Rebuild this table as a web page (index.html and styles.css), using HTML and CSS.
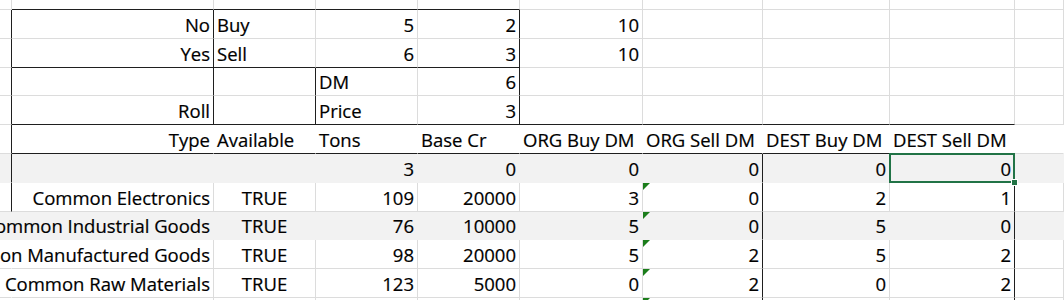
FILE: index.html
```html
<!DOCTYPE html>
<html>
<head>
<meta charset="utf-8">
<link rel="stylesheet" href="styles.css">
</head>
<body>
<div class="sheet">
  <div class="row top">
    <div class="c"></div><div class="c db"></div><div class="c db"></div><div class="c db"></div><div class="c db"></div><div class="c"></div><div class="c"></div><div class="c"></div><div class="c"></div><div class="c"></div>
  </div>
  <div class="row">
    <div class="c dr"></div><div class="c dr">No</div><div class="c lt">Buy</div><div class="c">5</div><div class="c dr">2</div><div class="c">10</div><div class="c"></div><div class="c"></div><div class="c"></div><div class="c"></div>
  </div>
  <div class="row">
    <div class="c dr"></div><div class="c dr db">Yes</div><div class="c lt db">Sell</div><div class="c db">6</div><div class="c dr db">3</div><div class="c">10</div><div class="c"></div><div class="c"></div><div class="c"></div><div class="c"></div>
  </div>
  <div class="row">
    <div class="c dr"></div><div class="c dr"></div><div class="c dr"></div><div class="c lt">DM</div><div class="c dr">6</div><div class="c"></div><div class="c"></div><div class="c"></div><div class="c"></div><div class="c"></div>
  </div>
  <div class="row">
    <div class="c dr"></div><div class="c dr db">Roll</div><div class="c dr db"></div><div class="c lt db">Price</div><div class="c dr db">3</div><div class="c db"></div><div class="c db"></div><div class="c db"></div><div class="c db"></div><div class="c"></div>
  </div>
  <div class="row hdr">
    <div class="c dr"></div><div class="c db">Type</div><div class="c lt db">Available</div><div class="c lt db">Tons</div><div class="c lt db">Base Cr</div><div class="c lt db">ORG Buy DM</div><div class="c lt db">ORG Sell DM</div><div class="c lt db">DEST Buy DM</div><div class="c lt db">DEST Sell DM</div><div class="c"></div>
  </div>
  <div class="row gray">
    <div class="c dr"></div><div class="c"></div><div class="c"></div><div class="c">3</div><div class="c">0</div><div class="c">0</div><div class="c dr">0</div><div class="c">0</div><div class="c dr">0<span class="selbox"></span><span class="handle"></span></div><div class="c"></div>
  </div>
  <div class="row">
    <div class="c dr"></div><div class="c">Common Electronics</div><div class="c ct">TRUE</div><div class="c">109</div><div class="c">20000</div><div class="c">3</div><div class="c dr">0<span class="tri"></span></div><div class="c">2</div><div class="c dr">1</div><div class="c"></div>
  </div>
  <div class="row gray">
    <div class="c"></div><div class="c">Common Industrial Goods</div><div class="c ct">TRUE</div><div class="c">76</div><div class="c">10000</div><div class="c">5</div><div class="c dr">0<span class="tri"></span></div><div class="c">5</div><div class="c dr">0</div><div class="c"></div>
  </div>
  <div class="row">
    <div class="c nr"></div><div class="c">Common Manufactured Goods</div><div class="c ct">TRUE</div><div class="c">98</div><div class="c">20000</div><div class="c">5</div><div class="c dr">2<span class="tri"></span></div><div class="c">5</div><div class="c dr">2</div><div class="c"></div>
  </div>
  <div class="row">
    <div class="c nr"></div><div class="c">Common Raw Materials</div><div class="c ct">TRUE</div><div class="c">123</div><div class="c">5000</div><div class="c">0</div><div class="c dr">2<span class="tri"></span></div><div class="c">0</div><div class="c dr">2</div><div class="c"></div>
  </div>
  <div class="row end">
    <div class="c nr"></div><div class="c"></div><div class="c"></div><div class="c"></div><div class="c"></div><div class="c"></div><div class="c dr"><span class="tri"></span></div><div class="c"></div><div class="c dr"></div><div class="c"></div>
  </div>
</div>
</body>
</html>
```

FILE: styles.css
```css
* { box-sizing: border-box; }
html, body { margin: 0; background: #fff; }
body { overflow: hidden; height: 300px; }

.sheet {
  width: 1064px;
  display: flex;
  flex-direction: column;
  font-family: "Open Sans", "Liberation Sans", sans-serif;
  font-size: 18.5px;
  line-height: 20px;
  color: #000;
  -webkit-text-stroke: 0.2px #000;
}

.row {
  display: grid;
  grid-template-columns: 12px 202px 102px 102px 102px 123px 120px 127px 125px 1fr;
  height: 28.8px;
  flex: none;
}
.row.top { height: 10px; }
.row.end { height: 10px; }

.c {
  position: relative;
  display: flex;
  align-items: flex-end;
  justify-content: flex-end;
  padding: 0 3px 3px 3px;
  border-right: 1px solid #dcdcdc;
  border-bottom: 1px solid #dcdcdc;
  white-space: nowrap;
  min-width: 0;
}
.lt { justify-content: flex-start; }
.ct { justify-content: center; }

.gray .c { background: #f2f2f2; border-color: transparent; }
.hdr .c { border-right-color: transparent; }

.sheet .nr { border-right-color: transparent; }
.sheet .dr { border-right-color: #1f1f1f; }
.sheet .db { border-bottom-color: #1f1f1f; }

.tri {
  position: absolute;
  left: 0;
  top: 0;
  width: 0;
  height: 0;
  border-top: 7px solid #1b7d1b;
  border-right: 7px solid transparent;
}

.selbox {
  position: absolute;
  left: -1px;
  top: -1px;
  right: -1px;
  bottom: -1px;
  border: 2px solid #217346;
  z-index: 2;
}
.handle {
  position: absolute;
  right: -4px;
  bottom: -4px;
  width: 7px;
  height: 7px;
  background: #217346;
  border: 1px solid #fff;
  z-index: 3;
}
```
